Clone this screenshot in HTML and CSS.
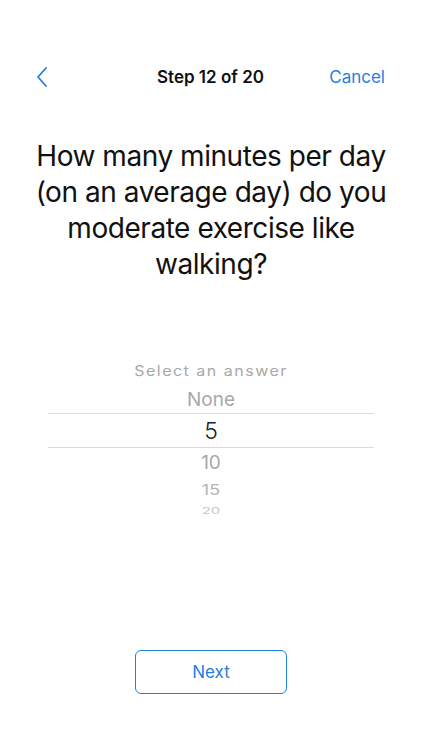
FILE: index.html
```html
<!doctype html>
<html lang="en">
<head>
    <meta charset="UTF-8">
    <title>Step 12 of 20</title>
    <link rel="stylesheet" href="styles.css">
</head>
<body>
<div class="screen">
    <div class="nav">
        <span class="back">
            <svg width="12" height="20" viewBox="0 0 12 20">
                <path d="M10 1 L2 10 L10 19" fill="none" stroke="#1f80e0" stroke-width="1.8" stroke-linecap="round" stroke-linejoin="round"/>
            </svg>
        </span>
        <span class="title">Step 12 of 20</span>
        <span class="cancel">Cancel</span>
    </div>

    <h1 class="question">How many minutes per day (on an average day) do you moderate exercise like walking?</h1>

    <div class="picker">
        <div class="row hint"><span>Select an answer</span></div>
        <div class="row near">None</div>
        <div class="row on">5</div>
        <div class="row near">10</div>
        <div class="row far"><span>15</span></div>
        <div class="row farther"><span>20</span></div>
    </div>

    <div class="footer">
        <button class="next">Next</button>
    </div>
</div>
</body>
</html>
```

FILE: styles.css
```css
* {
    margin: 0;
    padding: 0;
    box-sizing: border-box;
}

body {
    font-family: Inter, "Liberation Sans", sans-serif;
    background: #fff;
    color: #111;
}

.screen {
    width: 422px;
    height: 750px;
    display: flex;
    flex-direction: column;
    overflow: hidden;
}

/* top bar */
.nav {
    margin-top: 60px;
    height: 34px;
    padding: 0 37px 0 36px;
    display: flex;
    align-items: center;
    justify-content: space-between;
}

.back {
    width: 60px;
    display: flex;
    align-items: center;
}

.title {
    font-size: 17px;
    font-weight: 600;
    color: #111;
}

.cancel {
    width: 60px;
    text-align: right;
    font-size: 17px;
    color: #1f80e0;
}

/* question */
.question {
    margin-top: 44px;
    padding: 0 26px;
    font-size: 28px;
    font-weight: 400;
    line-height: 36px;
    letter-spacing: -0.45px;
    text-align: center;
    color: #111;
}

/* wheel picker */
.picker {
    margin: 75px auto 0;
    width: 326px;
    display: flex;
    flex-direction: column;
    align-items: center;
}

.row {
    width: 100%;
    display: flex;
    align-items: center;
    justify-content: center;
    color: #a8a8a8;
}

.hint {
    height: 28px;
    font-size: 16px;
    letter-spacing: 1.5px;
}

.hint span {
    display: inline-block;
    transform: scaleY(0.88);
}

.near {
    height: 28px;
    font-size: 19px;
}

.on {
    height: 35px;
    font-size: 23px;
    font-weight: 300;
    color: #222;
    border-top: 1px solid #dcdcdc;
    border-bottom: 1px solid #dcdcdc;
}

.near + .near {
    height: 30px;
}

.far {
    height: 27px;
    font-size: 18px;
    color: #b4b4b4;
}

.far span {
    display: inline-block;
    transform: scaleY(0.8);
}

.farther {
    height: 14px;
    font-size: 15px;
    color: #c8c8c8;
    overflow: hidden;
}

.farther span {
    display: inline-block;
    transform: scaleY(0.55);
}

/* bottom */
.footer {
    margin-top: auto;
    padding-bottom: 56px;
    display: flex;
    justify-content: center;
}

.next {
    width: 152px;
    height: 44px;
    border: 1px solid #1f80e0;
    border-radius: 6px;
    background: #fff;
    color: #1f80e0;
    font-family: inherit;
    font-size: 17px;
}
```
